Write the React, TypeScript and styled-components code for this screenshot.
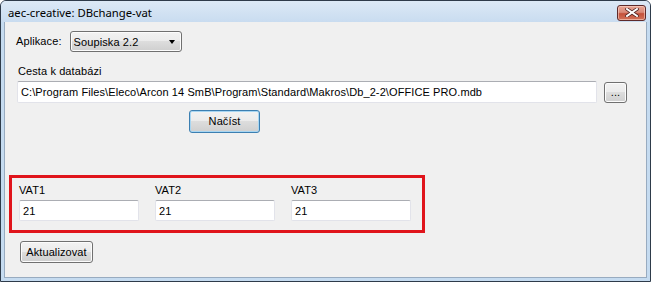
import { FC } from "react";
import styled, { createGlobalStyle } from "styled-components";

const GlobalStyle = createGlobalStyle`
  html, body {
    margin: 0;
    padding: 0;
    background: #ffffff;
  }

  body {
    font-family: "Liberation Sans", Arial, sans-serif;
    font-size: 11px;
    letter-spacing: 0.1px;
    color: #000000;
  }
`;

interface IVatField {
  label: string;
  value: string;
}

const vatFields: IVatField[] = [
  { label: "VAT1", value: "21" },
  { label: "VAT2", value: "21" },
  { label: "VAT3", value: "21" },
];

const App: FC = () => (
  <>
    <GlobalStyle />
    <Window>
      <TitleBar>
        <Title>aec-creative: DBchange-vat</Title>
        <CloseButton>
          <svg width="14" height="9" viewBox="0 0 14 9">
            <path
              d="M2 1 L12 8 M12 1 L2 8"
              stroke="#4a2020"
              strokeWidth="3.4"
              strokeLinecap="square"
            />
            <path
              d="M2 1 L12 8 M12 1 L2 8"
              stroke="#ffffff"
              strokeWidth="2"
              strokeLinecap="square"
            />
          </svg>
        </CloseButton>
      </TitleBar>

      <Client>
        <AppRow>
          <Label>Aplikace:</Label>
          <Combo>
            <span>Soupiska 2.2</span>
            <Arrow />
          </Combo>
        </AppRow>

        <PathLabel>Cesta k databázi</PathLabel>

        <PathRow>
          <PathInput>
            C:\Program Files\Eleco\Arcon 14 SmB\Program\Standard\Makros\Db_2-2\OFFICE
            PRO.mdb
          </PathInput>
          <Button width={23} height={21}>
            ...
          </Button>
        </PathRow>

        <LoadRow>
          <Button width={71} height={23} isDefault>
            Načíst
          </Button>
        </LoadRow>

        <VatBox>
          {vatFields.map((field) => (
            <VatColumn key={field.label}>
              <VatLabel>{field.label}</VatLabel>
              <TextBox>{field.value}</TextBox>
            </VatColumn>
          ))}
        </VatBox>

        <UpdateRow>
          <Button width={73} height={22}>
            Aktualizovat
          </Button>
        </UpdateRow>
      </Client>
    </Window>
  </>
);

export default App;

const Window = styled.div`
  box-sizing: border-box;
  width: 651px;
  height: 282px;
  display: flex;
  flex-direction: column;
  padding: 0 3px 3px 3px;

  background: #c5dbf0;
  border: 1px solid #2e3b4a;
  border-radius: 6px 6px 0 0;
`;

const TitleBar = styled.div`
  height: 21px;
  display: flex;
  align-items: center;
  justify-content: space-between;
  margin: 0 -3px;
  padding: 0 4px 0 7px;

  background: linear-gradient(#dce9f6, #c9dcf0);
  border-radius: 5px 5px 0 0;
`;

const Title = styled.div`
  font-family: "Noto Sans", "Open Sans", sans-serif;
  font-size: 11.3px;
  letter-spacing: 0;
  color: #000000;
  margin-top: 1px;
`;

const CloseButton = styled.div`
  box-sizing: border-box;
  width: 29px;
  height: 16px;
  margin-top: 2px;
  display: flex;
  align-items: center;
  justify-content: center;

  background: linear-gradient(#e8a493 0%, #d98a79 45%, #c4503a 55%, #d2735a 100%);
  border: 1px solid #5e2a2a;
  border-radius: 3px;
  box-shadow: inset 0 0 0 1px rgba(255, 220, 210, 0.55);
`;

const Client = styled.div`
  flex: 1;
  display: flex;
  flex-direction: column;

  background: #f0f0f0;
  border: 1px solid #98abc0;
  border-top: none;
`;

const AppRow = styled.div`
  display: flex;
  align-items: center;
  gap: 8px;
  padding: 9px 0 0 11px;
`;

const Label = styled.span`
  line-height: 13px;
`;

const Combo = styled.div`
  box-sizing: border-box;
  width: 112px;
  height: 21px;
  display: flex;
  align-items: center;
  justify-content: space-between;
  padding: 0 6px 0 3px;

  background: linear-gradient(#f2f2f2 0%, #ebebeb 50%, #dddddd 50%, #cfcfcf 100%);
  border: 1px solid #707070;
  border-radius: 3px;
  box-shadow: inset 0 0 0 1px #fcfcfc;
`;

const Arrow = styled.span`
  width: 0;
  height: 0;
  border-left: 3.5px solid transparent;
  border-right: 3.5px solid transparent;
  border-top: 4px solid #000000;
`;

const PathLabel = styled.div`
  padding: 13px 0 0 13px;
  line-height: 13px;
`;

const PathRow = styled.div`
  display: flex;
  align-items: center;
  gap: 7px;
  padding: 3px 0 0 12px;
`;

const TextBox = styled.div`
  box-sizing: border-box;
  height: 21px;
  display: flex;
  align-items: center;
  padding: 0 3px;
  white-space: nowrap;
  overflow: hidden;

  background: #ffffff;
  border: 1px solid #e2e3ea;
  border-top-color: #abadb3;
  border-radius: 2px;
`;

const PathInput = styled(TextBox)`
  width: 580px;
  height: 22px;
`;

const Button = styled.div<{ width: number; height: number; isDefault?: boolean }>`
  box-sizing: border-box;
  width: ${({ width }) => width}px;
  height: ${({ height }) => height}px;
  display: flex;
  align-items: center;
  justify-content: center;
  padding-bottom: 1px;

  background: linear-gradient(#f2f2f2 0%, #ebebeb 50%, #dddddd 50%, #cfcfcf 100%);
  border: 1px solid ${({ isDefault }) => (isDefault ? "#3c7fb1" : "#707070")};
  border-radius: 3px;
  box-shadow: inset 0 0 0 1px
    ${({ isDefault }) => (isDefault ? "#a8d6f2" : "#fcfcfc")};
`;

const LoadRow = styled.div`
  display: flex;
  padding: 7px 0 0 184px;
`;

const VatBox = styled.div`
  box-sizing: border-box;
  width: 416px;
  height: 58px;
  margin: 42px 0 0 4px;
  display: flex;
  gap: 16px;
  padding: 6px 0 0 7px;

  border: 3px solid #e0141b;
`;

const VatColumn = styled.div`
  width: 120px;
  display: flex;
  flex-direction: column;
  gap: 3px;
`;

const VatLabel = styled.div`
  line-height: 13px;
`;

const UpdateRow = styled.div`
  display: flex;
  padding: 8px 0 0 15px;
`;
